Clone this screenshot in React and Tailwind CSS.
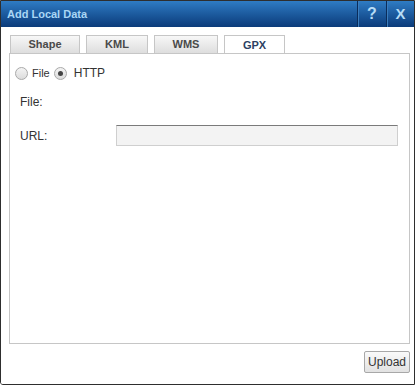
import React from 'react';

const font = { fontFamily: '"Liberation Sans", Arial, sans-serif' };

const Radio = ({ checked }) => (
  <span className="relative inline-block h-[13px] w-[13px] rounded-full border border-[#a9a9a9] bg-gradient-to-b from-[#f4f4f4] to-[#dcdcdc]">
    {checked && (
      <span className="absolute left-[3px] top-[3px] h-[5px] w-[5px] rounded-full bg-[#444]" />
    )}
  </span>
);

const Tab = ({ label, width, active }) =>
  active ? (
    <div
      className={`${width} -mb-px flex h-[19px] items-center justify-center border border-b-0 border-[#c6c6c6] bg-white text-[11px] font-bold text-[#2b3f63]`}
    >
      {label}
    </div>
  ) : (
    <div
      className={`${width} flex h-[18px] items-center justify-center border border-b-0 border-[#c6c6c6] bg-gradient-to-b from-[#f7f7f7] to-[#dedede] text-[11px] font-bold text-[#4a4a4a]`}
    >
      {label}
    </div>
  );

export default function App() {
  return (
    <div className="h-[386px] w-[416px] bg-white" style={font}>
      <div className="flex h-[385px] w-[415px] flex-col overflow-hidden rounded-bl-[3px] border border-[#2e2e2e]">
        {/* Title bar */}
        <div className="flex h-[26px] shrink-0 items-stretch bg-gradient-to-b from-[#2f7cc4] to-[#0b3b7a]">
          <div className="flex flex-1 items-center pl-[6px] text-[11px] font-bold text-[#a9d6f5]">
            Add Local Data
          </div>
          <div className="flex w-[29px] items-center justify-center border-l border-l-[#0a2c5a] text-[16px] font-bold text-[#b6dcf6] shadow-[inset_1px_0_0_#3b7dbd]">
            ?
          </div>
          <div className="flex w-[28px] items-center justify-center border-l border-l-[#0a2c5a] text-[15px] font-bold text-[#b6dcf6] shadow-[inset_1px_0_0_#3b7dbd]">
            X
          </div>
        </div>

        {/* Body */}
        <div className="flex flex-1 flex-col bg-white pl-[8px] pt-[8px]">
          <div className="flex items-end gap-[6px] pl-[1px]">
            <Tab label="Shape" width="w-[70px]" />
            <Tab label="KML" width="w-[62px]" />
            <Tab label="WMS" width="w-[64px]" />
            <Tab label="GPX" width="w-[61px]" active />
          </div>

          <div className="h-[291px] w-[401px] border border-[#c6c6c6] bg-white text-[#333]">
            <div className="mt-[10px] flex items-center pl-[5px] text-[11px] leading-[18px]">
              <Radio />
              <span className="ml-[4px]">File</span>
              <span className="ml-[4px] flex">
                <Radio checked />
              </span>
              <span className="ml-[7px] text-[12px]">HTTP</span>
            </div>
            <div className="mt-[11px] pl-[10px] text-[12px] leading-[18px]">File:</div>
            <div className="mt-[14px] flex items-center pl-[10px] text-[12px] leading-[18px]">
              <span className="w-[96px]">URL:</span>
              <div className="h-[21px] w-[282px] border border-[#cfcfcf] border-t-[#7a7a7a] bg-[#f3f3f3]" />
            </div>
          </div>

          <div className="flex w-[401px] justify-end pt-[7px]">
            <button className="h-[22px] w-[46px] rounded-[2px] border border-[#a8a8a8] bg-gradient-to-b from-[#fafafa] to-[#e2e2e2] text-[12px] text-[#333]">
              Upload
            </button>
          </div>
        </div>
      </div>
    </div>
  );
}
